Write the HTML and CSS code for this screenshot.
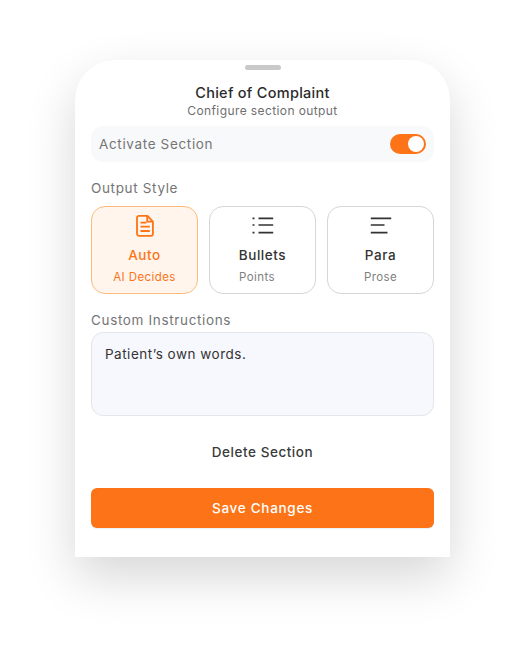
FILE: index.html
```html
<!DOCTYPE html>
<html lang="en">
<head>
<meta charset="utf-8">
<title>Chief of Complaint</title>
<link rel="stylesheet" href="styles.css">
</head>
<body>
<main class="sheet">
  <div class="handle"></div>
  <h1 class="title">Chief of Complaint</h1>
  <p class="subtitle">Configure section output</p>
  <div class="activate">
    <span class="activate-label">Activate Section</span>
    <span class="toggle"><span class="knob"></span></span>
  </div>
  <div class="section-label style-label">Output Style</div>
  <div class="styles">
    <div class="style-card active">
      <svg class="icon" width="24" height="24" viewBox="0 0 24 24" fill="none" stroke="currentColor" stroke-width="1.800" stroke-linejoin="round"><path d="M6 1.900h8.500l5.400 5.800V19.800a2 2 0 0 1-2 2H6a2 2 0 0 1-2-2V3.900a2 2 0 0 1 2-2z"/><path d="M14.200 2v5.700h5.600"/><path d="M7.500 8.700h6M7.500 12.700h9.300M7.500 17h9.300"/></svg>
      <span class="style-name">Auto</span>
      <span class="style-sub">AI Decides</span>
    </div>
    <div class="style-card">
      <svg class="icon" width="24" height="24" viewBox="0 0 24 24" fill="none" stroke="currentColor" stroke-width="1.700"><path d="M7.500 4.300h14.700M7.500 11h14.700M7.500 18.700h14.700"/><path d="M1.500 4.300h2M1.500 11h2M1.500 18.700h2"/></svg>
      <span class="style-name">Bullets</span>
      <span class="style-sub points">Points</span>
    </div>
    <div class="style-card">
      <svg class="icon" width="24" height="24" viewBox="0 0 24 24" fill="none" stroke="currentColor" stroke-width="1.700"><path d="M1.800 4.300h20.400M1.800 11h13.700M1.800 18.700h16.700"/></svg>
      <span class="style-name">Para</span>
      <span class="style-sub">Prose</span>
    </div>
  </div>
  <div class="section-label custom-label">Custom Instructions</div>
  <div class="instructions">Patient’s own words.</div>
  <div class="delete">Delete Section</div>
  <div class="save">Save Changes</div>
</main>
</body>
</html>
```
FILE: styles.css
```css
* { box-sizing: border-box; }
html, body { margin: 0; height: 100%; }
body {
  background: #fff;
  font-family: "Inter", "Open Sans", sans-serif;
  padding: 60px 75px 0;
  overflow: hidden;
}
.sheet {
  width: 375px;
  height: 497px;
  background: #fff;
  border-radius: 40px 40px 0 0;
  box-shadow: 0 20px 50px rgba(0, 0, 0, 0.16);
  padding: 5px 16px 0;
  display: flex;
  flex-direction: column;
}
.handle {
  width: 36px;
  height: 5px;
  border-radius: 3px;
  background: #c9c9c9;
  align-self: center;
}
.title {
  margin: 14px 0 0;
  font-size: 14.500px;
  line-height: 18px;
  font-weight: 500;
  letter-spacing: 0.28px;
  color: #2b2b2b;
  text-align: center;
}
.subtitle {
  margin: 1px 0 0;
  font-size: 12px;
  line-height: 16px;
  letter-spacing: 0.4px;
  color: #6f6f6f;
  text-align: center;
}
.activate {
  margin-top: 7px;
  height: 36px;
  border-radius: 12px;
  background: #f8f9fb;
  padding: 0 8px;
  display: flex;
  align-items: center;
  justify-content: space-between;
}
.activate-label {
  font-size: 13.500px;
  color: #757575;
  letter-spacing: 0.65px;
}
.toggle {
  width: 36px;
  height: 20px;
  border-radius: 10px;
  background: #fc7417;
  display: flex;
  align-items: center;
  justify-content: flex-end;
  padding: 0 2px;
}
.knob {
  width: 16px;
  height: 16px;
  border-radius: 50%;
  background: #fff;
}
.section-label {
  font-size: 13.500px;
  line-height: 18px;
  color: #757575;
  letter-spacing: 0.65px;
}
.style-label { margin-top: 17px; }
.styles {
  margin-top: 9px;
  display: grid;
  grid-template-columns: repeat(3, 107px);
  gap: 11px;
}
.style-card {
  height: 88px;
  border: 1px solid #d6d6d6;
  border-radius: 14px;
  background: #fff;
  color: #333;
  display: flex;
  flex-direction: column;
  align-items: center;
  padding-top: 7px;
}
.style-card.active {
  border-color: #fdbb7c;
  background: #fff5ec;
  color: #fc7417;
}
.icon { display: block; }
.style-name {
  margin-top: 8px;
  font-size: 13.500px;
  line-height: 18px;
  font-weight: 500;
  letter-spacing: 0.55px;
}
.style-sub {
  margin-top: 5px;
  font-size: 11.500px;
  line-height: 16px;
  letter-spacing: 0.4px;
  color: #808080;
}
.style-sub.points { margin-right: 11px; }
.active .style-sub { color: #fc7417; }
.custom-label { margin-top: 17px; }
.instructions {
  margin-top: 3px;
  height: 84px;
  border: 1px solid #e3e5ea;
  border-radius: 12px;
  background: #f7f8fe;
  padding: 12px 13px;
  font-size: 13.500px;
  line-height: 18px;
  letter-spacing: 0.5px;
  color: #333;
}
.delete {
  margin-top: 27px;
  font-size: 13.500px;
  line-height: 18px;
  font-weight: 500;
  letter-spacing: 0.55px;
  color: #3a3a3a;
  text-align: center;
}
.save {
  margin-top: 27px;
  height: 40px;
  border-radius: 6px;
  background: #fc7417;
  box-shadow: 0 1px 0 #e6f2fa;
  color: #fff;
  font-size: 13.500px;
  font-weight: 500;
  letter-spacing: 0.7px;
  display: flex;
  align-items: center;
  justify-content: center;
}
```
